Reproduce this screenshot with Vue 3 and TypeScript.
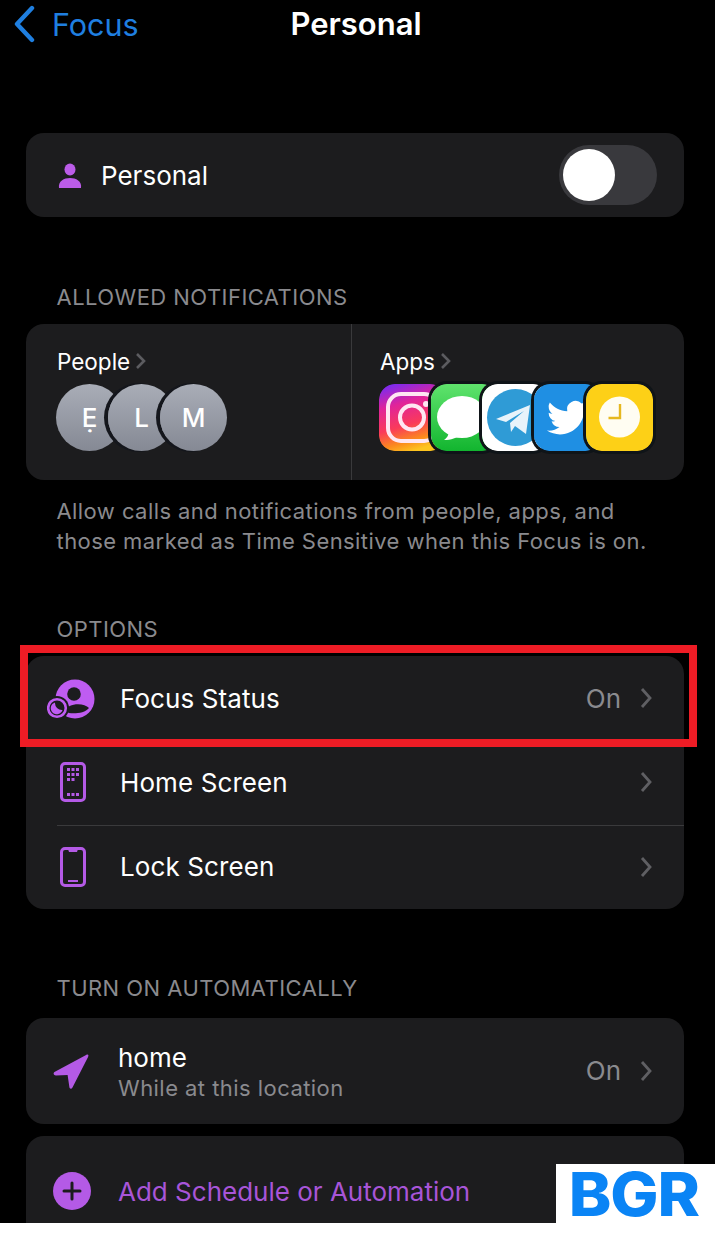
<script setup lang="ts">
// Focus settings screen, "Personal" mode
const optionRows = [
  { key: 'status', label: 'Focus Status', value: 'On' },
  { key: 'home', label: 'Home Screen', value: '' },
  { key: 'lock', label: 'Lock Screen', value: '' },
]
const people = ['Ẹ', 'L', 'M']
</script>

<template>
  <div class="page">
    <div class="screen">
      <header class="nav">
        <div class="back">
          <svg class="back-icon" width="24" height="38" viewBox="0 0 24 38">
            <path d="M20 3 L5 19 L20 35" fill="none" stroke="#1f7fe0" stroke-width="4.4" stroke-linecap="round" stroke-linejoin="round" />
          </svg>
          <span>Focus</span>
        </div>
        <h1 class="title">Personal</h1>
      </header>

      <section class="card toggle-card">
        <svg class="person" width="24" height="25" viewBox="0 0 24 25">
          <ellipse cx="12" cy="6.5" rx="5.5" ry="6" fill="#bb5ce8" />
          <path d="M1 25 C0 18 6 15 12 15 C18 15 24 18 23 25 Z" fill="#bb5ce8" />
        </svg>
        <span class="toggle-label">Personal</span>
        <div class="switch"><div class="knob"></div></div>
      </section>

      <h2 class="section-label allowed">ALLOWED NOTIFICATIONS</h2>
      <section class="card allowed-card">
        <div class="allowed-col">
          <div class="allowed-head">
            <span>People</span>
            <svg width="11" height="18" viewBox="0 0 11 18"><path d="M2 2 L9 9 L2 16" fill="none" stroke="#5c5c60" stroke-width="2.6" /></svg>
          </div>
          <div class="stack">
            <div v-for="p in people" :key="p" class="avatar">{{ p }}</div>
          </div>
        </div>
        <div class="allowed-col apps-col">
          <div class="allowed-head">
            <span>Apps</span>
            <svg width="11" height="18" viewBox="0 0 11 18"><path d="M2 2 L9 9 L2 16" fill="none" stroke="#5c5c60" stroke-width="2.6" /></svg>
          </div>
          <div class="stack app-stack">
            <svg class="app" viewBox="0 0 67 67">
              <defs>
                <linearGradient id="ig" x1="0.2" y1="0" x2="0.5" y2="1">
                  <stop offset="0" stop-color="#7a2bf0" />
                  <stop offset="0.3" stop-color="#e0249a" />
                  <stop offset="0.62" stop-color="#fa3a5a" />
                  <stop offset="0.85" stop-color="#fb8a1e" />
                  <stop offset="1" stop-color="#fdc41f" />
                </linearGradient>
              </defs>
              <rect width="67" height="67" rx="15" fill="url(#ig)" />
              <rect x="9" y="10" width="49" height="47" rx="13" fill="none" stroke="#ffe6f2" stroke-width="4" />
              <circle cx="33" cy="33.500" r="12" fill="none" stroke="#ffe6f2" stroke-width="4" />
              <circle cx="47" cy="20" r="3" fill="#ffe6f2" />
            </svg>
            <svg class="app" viewBox="0 0 67 67">
              <defs>
                <linearGradient id="msg" x1="0" y1="0" x2="0" y2="1">
                  <stop offset="0" stop-color="#5fe36d" />
                  <stop offset="1" stop-color="#12b52f" />
                </linearGradient>
              </defs>
              <rect width="67" height="67" rx="15" fill="url(#msg)" />
              <ellipse cx="31" cy="33" rx="25" ry="21" fill="#fff" />
              <path d="M18 46 C18 51 16 54 13 56 C20 56 26 54 30 50 Z" fill="#fff" />
            </svg>
            <svg class="app" viewBox="0 0 67 67">
              <rect width="67" height="67" rx="15" fill="#fff" />
              <circle cx="33.500" cy="33.500" r="28.500" fill="#2f9bd6" />
              <path d="M14 35 L48 21 L44 50 L33 42 L29 48 L28 39 L42 27 L24 38 Z" fill="#e8f3fa" />
            </svg>
            <svg class="app" viewBox="0 0 67 67">
              <rect width="67" height="67" rx="15" fill="#1f8fe3" />
              <g transform="translate(13 13) scale(1.72)">
                <path fill="#fff" d="M23.95 4.57a10 10 0 0 1-2.82.77 4.96 4.96 0 0 0 2.16-2.72c-.95.55-2 .96-3.12 1.19a4.92 4.92 0 0 0-8.38 4.48C7.69 8.1 4.07 6.13 1.64 3.16a4.82 4.82 0 0 0-.67 2.48c0 1.71.87 3.21 2.19 4.1a4.9 4.9 0 0 1-2.23-.62v.06a4.92 4.92 0 0 0 3.95 4.83 5 5 0 0 1-2.21.08 4.94 4.94 0 0 0 4.6 3.42 9.87 9.87 0 0 1-6.1 2.1c-.39 0-.78-.02-1.17-.07a13.95 13.95 0 0 0 7.56 2.21c9.05 0 14-7.5 14-13.98 0-.21 0-.42-.02-.63a9.94 9.94 0 0 0 2.46-2.55z" />
              </g>
            </svg>
            <svg class="app" viewBox="0 0 67 67">
              <rect width="67" height="67" rx="15" fill="#fdd017" />
              <circle cx="33.500" cy="33" r="20.500" fill="#fffdf2" />
              <path d="M34 20 V34 H22.500" fill="none" stroke="#e6b820" stroke-width="2.4" />
            </svg>
          </div>
        </div>
      </section>
      <p class="allowed-note">Allow calls and notifications from people, apps, and those marked as Time Sensitive when this Focus is on.</p>

      <h2 class="section-label options">OPTIONS</h2>
      <section class="card options-card">
        <div v-for="row in optionRows" :key="row.key" class="row option-row" :class="{ divided: row.key === 'lock' }">
          <div class="row-icon">
            <svg v-if="row.key === 'status'" class="status-icon" width="50" height="44" viewBox="0 0 50 44">
              <circle cx="28" cy="23" r="19.500" fill="#bf5cf2" />
              <circle cx="27" cy="18" r="6.800" fill="#1c1c1e" />
              <path d="M18 35 C20 27 37 26 42 32 C38 37 28 38 22 37 Z" fill="#1c1c1e" />
              <circle cx="10" cy="32" r="12" fill="#1c1c1e" />
              <circle cx="10" cy="32" r="8.800" fill="none" stroke="#bf5cf2" stroke-width="2.600" />
              <path d="M8 26.500 A6 6 0 1 0 15.500 34 A7 7 0 0 1 8 26.500 Z" fill="#bf5cf2" />
            </svg>
            <svg v-else-if="row.key === 'home'" width="26" height="40" viewBox="0 0 26 40">
              <rect x="1.500" y="1.500" width="23" height="37" rx="3.500" fill="none" stroke="#b45ae6" stroke-width="3" />
              <g fill="#b45ae6">
                <rect x="7" y="6" width="3" height="3" /><rect x="11.500" y="6" width="3" height="3" /><rect x="16" y="6" width="3" height="3" />
                <rect x="7" y="11" width="3" height="3" /><rect x="11.500" y="11" width="3" height="3" /><rect x="16" y="11" width="3" height="3" />
                <rect x="7" y="16" width="3" height="3" /><rect x="11.500" y="16" width="3" height="3" />
                <rect x="7" y="31" width="3" height="3" /><rect x="11.500" y="31" width="3" height="3" /><rect x="16" y="31" width="3" height="3" />
              </g>
            </svg>
            <svg v-else width="26" height="40" viewBox="0 0 26 40">
              <rect x="1.500" y="1.500" width="23" height="37" rx="3.500" fill="none" stroke="#b45ae6" stroke-width="3" />
              <path d="M8 2 H18 L17 5 H9 Z" fill="#b45ae6" />
              <rect x="8" y="33" width="10" height="2" fill="#b45ae6" />
            </svg>
          </div>
          <span class="row-label">{{ row.label }}</span>
          <span v-if="row.value" class="row-value">{{ row.value }}</span>
          <svg class="chevron" width="12" height="22" viewBox="0 0 12 22"><path d="M2 2 L10 11 L2 20" fill="none" stroke="#5f5f63" stroke-width="2.800" /></svg>
        </div>
        <div class="highlight"></div>
      </section>

      <h2 class="section-label auto">TURN ON AUTOMATICALLY</h2>
      <section class="card home-card">
        <div class="row">
          <div class="row-icon">
            <svg class="arrow-icon" width="37" height="38" viewBox="0 0 38 38">
              <path d="M1.500 20 L34 2.500 C36 1.500 37 2.500 36 4.500 L20 36 C19 38 17 37.500 16.800 35.500 L15 23 L3 23.500 C0.500 23.500 0 21 1.500 20 Z" fill="#b45ae6" />
            </svg>
          </div>
          <div class="two-line">
            <span class="place">home</span>
            <span class="place-sub">While at this location</span>
          </div>
          <span class="row-value">On</span>
          <svg class="chevron" width="12" height="22" viewBox="0 0 12 22"><path d="M2 2 L10 11 L2 20" fill="none" stroke="#5f5f63" stroke-width="2.800" /></svg>
        </div>
      </section>

      <section class="card add-card">
        <div class="row-icon">
          <svg class="plus-icon" width="38" height="38" viewBox="0 0 38 38">
            <circle cx="19" cy="19" r="19" fill="#b45ae6" />
            <path d="M19 11 V27 M11 19 H27" stroke="#1c1c1e" stroke-width="3" stroke-linecap="round" />
          </svg>
        </div>
        <span class="add-label">Add Schedule or Automation</span>
      </section>

      <div class="watermark"><span>BGR</span></div>
    </div>
  </div>
</template>

<style scoped>
.page {
  width: 719px;
  height: 1240px;
  background: #fff;
  overflow: hidden;
  font-family: Inter, "Liberation Sans", sans-serif;
}
.screen {
  position: relative;
  width: 715px;
  height: 1223px;
  background: #000;
  padding: 0 31px 0 26px;
  box-sizing: border-box;
  color: #fff;
}
.nav {
  position: relative;
  height: 48px;
  display: flex;
  align-items: center;
  justify-content: center;
}
.back {
  position: absolute;
  left: -14px;
  top: 5px;
  display: flex;
  align-items: center;
  gap: 16px;
  color: #1f7fe0;
  font-size: 30.500px;
}
.title {
  margin: -2px 0 0 2px;
  font-size: 31px;
  font-weight: 600;
}
.card {
  background: #1c1c1e;
  border-radius: 18px;
}
.toggle-card {
  margin-top: 85px;
  height: 84px;
  display: flex;
  align-items: center;
  padding: 0 27px 0 32px;
}
.toggle-label {
  margin-left: 19px;
  font-size: 26px;
  flex: 1;
}
.switch {
  width: 98px;
  height: 60px;
  border-radius: 30px;
  background: #39393d;
  display: flex;
  align-items: center;
  padding-left: 4px;
  box-sizing: border-box;
}
.knob {
  width: 52px;
  height: 52px;
  border-radius: 50%;
  background: #fff;
}
.section-label {
  margin: 0 0 0 30.500px;
  font-size: 22px;
  font-weight: 400;
  line-height: 28px;
  letter-spacing: 0.45px;
  color: #8a8a8e;
}
.allowed { margin-top: 66px; }
.options { margin-top: 59px; }
.auto { margin-top: 65px; }
.allowed-card {
  margin-top: 13px;
  height: 156px;
  display: flex;
}
.allowed-col {
  width: 325px;
  box-sizing: border-box;
  padding: 24px 0 0 30px;
}
.apps-col {
  flex: 1;
  border-left: 1px solid #3a3a3c;
  padding-left: 27px;
}
.allowed-head {
  display: flex;
  align-items: center;
  gap: 5px;
  height: 26px;
  padding-left: 1px;
  font-size: 22.500px;
}
.stack {
  display: flex;
  margin-top: 10px;
}
.avatar {
  width: 67px;
  height: 67px;
  border-radius: 50%;
  background: linear-gradient(#a9adb7, #858994);
  box-shadow: -3px 0 0 1px #14161c;
  margin-right: -15px;
  display: flex;
  align-items: center;
  justify-content: center;
  font-size: 26px;
  font-weight: 500;
  position: relative;
}
.avatar:first-child { box-shadow: none; }
.app {
  width: 67px;
  height: 67px;
  flex-shrink: 0;
  border-radius: 16px;
  box-shadow: 0 0 0 3px #0f1418;
  margin-right: -15.300px;
  position: relative;
}
.app:first-child { box-shadow: none; }
.allowed-note {
  margin: 16px 0 0 30.500px;
  font-size: 22px;
  line-height: 30px;
  letter-spacing: 0.43px;
  color: #8a8a8e;
  width: 600px;
}
.options-card {
  position: relative;
  margin-top: 13px;
}
.row {
  display: flex;
  align-items: center;
  padding: 0 32px 0 0;
}
.option-row {
  height: 84.300px;
}
.divided {
  position: relative;
}
.divided::before {
  content: '';
  position: absolute;
  left: 31px;
  right: 0;
  top: 0;
  height: 1px;
  background: #3a3a3c;
}
.row-icon {
  width: 94px;
  flex-shrink: 0;
  display: flex;
  justify-content: center;
}
.status-icon { margin-left: -2px; }
.arrow-icon { margin-left: -3px; }
.plus-icon { margin-left: -2px; }
.row-label {
  flex: 1;
  font-size: 26px;
  letter-spacing: 0.1px;
}
.row-value {
  font-size: 26px;
  color: #8a8a8e;
  margin-right: 19px;
}
.chevron {
  flex-shrink: 0;
}
.highlight {
  position: absolute;
  left: -6px;
  right: -13px;
  top: -11px;
  height: 102px;
  border: 8px solid #ee1c25;
  box-sizing: border-box;
  pointer-events: none;
}
.home-card {
  margin-top: 16px;
  height: 106px;
  display: flex;
  align-items: center;
}
.home-card .row {
  width: 100%;
}
.two-line {
  flex: 1;
  display: flex;
  flex-direction: column;
  margin-left: -2px;
  padding-top: 2px;
}
.place {
  font-size: 26px;
  line-height: 32px;
}
.place-sub {
  font-size: 22px;
  line-height: 28px;
  letter-spacing: 0.45px;
  color: #8a8a8e;
}
.add-card {
  margin-top: 12px;
  height: 87px;
  box-sizing: border-box;
  padding-top: 24px;
  border-radius: 18px 18px 0 0;
  display: flex;
  align-items: center;
}
.add-label {
  font-size: 26px;
  color: #a855d8;
  margin-left: -2px;
}
.watermark {
  position: absolute;
  right: 0;
  bottom: 0;
  width: 159px;
  height: 59px;
  background: #fff;
  color: #0a84f5;
  display: flex;
  align-items: center;
  justify-content: center;
}
.watermark span {
  font-size: 60px;
  font-weight: 800;
  line-height: 44px;
  letter-spacing: -1px;
  margin-right: 3px;
  transform: scaleX(1.07);
}
</style>
